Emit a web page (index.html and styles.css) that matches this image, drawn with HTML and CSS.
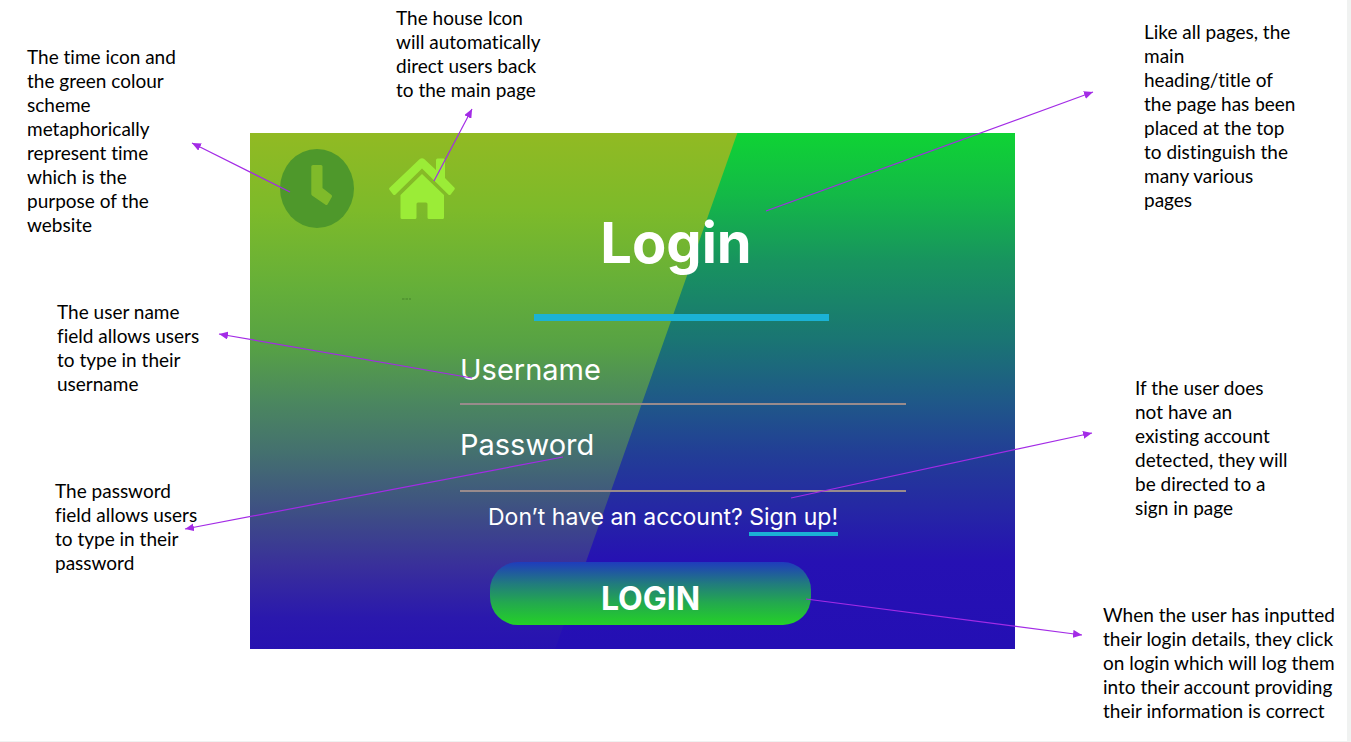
FILE: index.html
```html
<!DOCTYPE html>
<html lang="en">
<head>
<meta charset="utf-8">
<title>Login page design notes</title>
<link rel="stylesheet" href="styles.css">
</head>
<body>
<main class="slide">
  <section class="notes notes-left">
    <p class="note note-clock">The time icon and<br>the green colour<br>scheme<br>metaphorically<br>represent time<br>which is the<br>purpose of the<br>website</p>
    <p class="note note-username">The user name<br>field allows users<br>to type in their<br>username</p>
    <p class="note note-password">The password<br>field allows users<br>to type in their<br>password</p>
  </section>

  <section class="centre">
    <p class="note note-house">The house Icon<br>will automatically<br>direct users back<br>to the main page</p>
    <div class="card">
      <nav class="brand">
        <svg class="clock" viewBox="0 0 74 79" role="img" aria-label="Time">
          <ellipse cx="37" cy="39.500" rx="37" ry="39.500" fill="#4e982b"/>
          <path d="M33 16h8q1.500 0 1.500 1.500V39l9 7q1 1 .3 2l-4.300 7.500q-1 1-2 .3L32 46.500q-.7-.6-.7-1.500V17.500Q31.300 16 33 16z" fill="#7fba2a"/>
        </svg>
        <a class="home" href="#" aria-label="Main page">
          <svg viewBox="0 0 66 62">
            <g fill="#9bec37">
              <path d="M30.500 1.200q2.500-2 5 0L47 12V2q0-1.500 1.500-1.500h6Q56 .5 56 2v18l9.300 9.500q1 1.200 0 2.200l-3.600 4.700q-1.200 1.100-2.400 0L33 10.500 6.500 36.400q-1.200 1.100-2.400 0L.6 32q-1-1.200 0-2.300z"/>
              <path d="M33 16l22 21v22.500q0 1.500-1.500 1.500H40q-1.500 0-1.500-1.500V46q0-1.500-1.500-1.500h-8q-1.500 0-1.500 1.500v13.500Q27.500 61 26 61H13q-1.500 0-1.500-1.500V37z"/>
            </g>
          </svg>
        </a>
      </nav>
      <form class="form">
        <h1 class="title">Login</h1>
        <hr class="rule">
        <label class="label" for="username">Username</label>
        <input class="field" id="username" type="text">
        <label class="label label-next" for="password">Password</label>
        <input class="field field-tall" id="password" type="password">
        <p class="signup">Don’t have an account? <a class="signup-link" href="#">Sign up!</a></p>
        <button class="submit" type="button">LOGIN</button>
      </form>
    </div>
  </section>

  <section class="notes notes-right">
    <p class="note note-title">Like all pages, the<br>main<br>heading/title of<br>the page has been<br>placed at the top<br>to distinguish the<br>many various<br>pages</p>
    <p class="note note-signup">If the user does<br>not have an<br>existing account<br>detected, they will<br>be directed to a<br>sign in page</p>
    <p class="note note-submit">When the user has inputted<br>their login details, they click<br>on login which will log them<br>into their account providing<br>their information is correct</p>
  </section>

  <svg class="arrows" viewBox="0 0 1347 741" preserveAspectRatio="none" aria-hidden="true">
    <defs>
      <marker id="head" markerUnits="userSpaceOnUse" markerWidth="10" markerHeight="8" refX="9" refY="4" orient="auto">
        <path d="M0 0L9 4L0 8z" fill="#a32be6"/>
      </marker>
    </defs>
    <g stroke="#a32be6" stroke-width="1.200">
      <line x1="290" y1="192" x2="192" y2="143" marker-end="url(#head)"/>
      <line x1="434" y1="181" x2="472" y2="109" marker-end="url(#head)"/>
      <line x1="766" y1="211" x2="1093" y2="92" marker-end="url(#head)"/>
      <line x1="472" y1="378" x2="219" y2="334" marker-end="url(#head)"/>
      <line x1="563" y1="457" x2="185" y2="529" marker-end="url(#head)"/>
      <line x1="791" y1="498" x2="1092" y2="433" marker-end="url(#head)"/>
      <line x1="806" y1="599" x2="1082" y2="635" marker-end="url(#head)"/>
    </g>
    <path d="M402 299h9" stroke="#4f9130" stroke-width="1.500" stroke-dasharray="2.500 1"/>
  </svg>
</main>
</body>
</html>
```
FILE: styles.css
```css
* {
  box-sizing: border-box;
}

body {
  margin: 0;
  padding: 0 4px 1px 0;
  background: #f0f2f1;
  font-family: Lato, "Liberation Sans", sans-serif;
  color: #000;
}

.slide {
  position: relative;
  display: grid;
  grid-template-columns: 250fr 765fr 332fr;
  min-height: calc(100vh - 1px);
  background: #fff;
}

.arrows {
  position: absolute;
  inset: 0;
  width: 100%;
  height: 100%;
  pointer-events: none;
}

.notes {
  display: flex;
  flex-direction: column;
}

.note {
  margin: 0;
  font-size: 19px;
  font-variant-ligatures: none;
  line-height: 24px;
  white-space: nowrap;
}

.notes-left {
  padding-top: 45px;
}

.note-clock {
  margin-left: 27px;
}

.note-username {
  margin: 63px 0 0 57px;
}

.note-password {
  margin: 83px 0 0 55px;
}

.notes-right {
  padding-top: 20px;
}

.note-title {
  margin-left: 129px;
}

.note-signup {
  margin: 164px 0 0 120px;
}

.note-submit {
  margin: 83px 0 0 88px;
}

.note-house {
  margin: 6px 0 31px 146px;
}

.card {
  position: relative;
  display: grid;
  grid-template-columns: 210fr 446fr 109fr;
  padding-bottom: 24px;
  background: linear-gradient(#0fd334 0%, #13b947 12%, #18935f 25%, #1a7573 40%, #1f5888 52%, #223e96 62%, #2529a3 72%, #2611b3 83%, #240fb4 100%);
}

.card::before {
  content: "";
  position: absolute;
  inset: 0;
  clip-path: polygon(0 0, 63.7% 0, 39.9% 100%, 0 100%);
  background: linear-gradient(#91ba23 0%, #7dba2a 15%, #65af39 30%, #57a244 41%, #4b875f 52%, #44706f 62%, #3f567f 71%, #392f9b 84%, #2a18ad 94%, #2712b1 100%);
}

.brand {
  position: relative;
  display: flex;
  align-items: flex-start;
  gap: 35px;
  padding: 16px 0 0 30px;
}

.clock {
  flex: none;
  width: 74px;
  height: 79px;
}

.home {
  flex: none;
  width: 66px;
  padding-top: 9px;
}

.home svg {
  display: block;
}

.form {
  position: relative;
  display: flex;
  flex-direction: column;
  padding-top: 82px;
  font-family: Inter, "Liberation Sans", sans-serif;
  color: #fff;
}

.title {
  margin: 0;
  padding-right: 14px;
  font-size: 56px;
  font-weight: 700;
  line-height: 56px;
  text-align: center;
}

.rule {
  width: 295px;
  height: 7px;
  margin: 43px 0 33px 74px;
  border: 0;
  background: #1bb2d5;
}

.label {
  font-size: 29px;
  line-height: 32px;
}

.label-next {
  margin-top: 24px;
}

.field {
  height: 19px;
  padding: 0;
  border: 0;
  border-bottom: 2px solid #998b8c;
  border-radius: 0;
  background: transparent;
  color: #fff;
  font-size: 14px;
  outline: none;
}

.field-tall {
  height: 31px;
}

.signup {
  margin: 10px 0 0 28px;
  font-size: 23px;
  line-height: 30px;
  white-space: nowrap;
}

.signup-link {
  display: inline-block;
  border-bottom: 4px solid #1bb2d5;
  color: #fff;
  text-decoration: none;
}

.submit {
  width: 321px;
  height: 63px;
  margin: 26px 0 0 30px;
  padding: 10px 0 0;
  border: 0;
  border-radius: 28px;
  background: linear-gradient(#1f3cbd 0%, #217c7d 35%, #23a94e 65%, #24d127 100%);
  color: #fff;
  font-family: inherit;
  font-size: 32px;
  font-weight: 700;
}
```
